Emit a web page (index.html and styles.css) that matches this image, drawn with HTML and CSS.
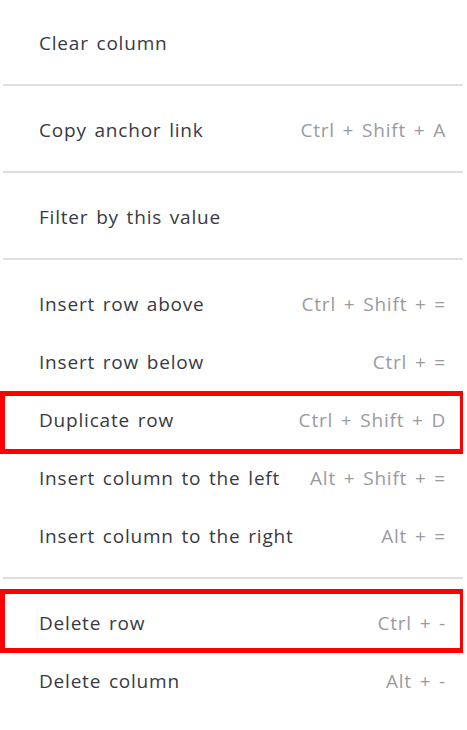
FILE: index.html
```html
<!DOCTYPE html>
<html>
<head>
<meta charset="utf-8">
<link rel="stylesheet" href="styles.css">
</head>
<body>
<div class="menu">
  <div class="item"><span class="label">Clear column</span></div>
  <div class="sep"></div>
  <div class="item"><span class="label">Copy anchor link</span><span class="key">Ctrl + Shift + A</span></div>
  <div class="sep"></div>
  <div class="item"><span class="label">Filter by this value</span></div>
  <div class="sep"></div>
  <div class="item"><span class="label">Insert row above</span><span class="key">Ctrl + Shift + =</span></div>
  <div class="item"><span class="label">Insert row below</span><span class="key">Ctrl + =</span></div>
  <div class="item hl hl-a"><span class="label">Duplicate row</span><span class="key">Ctrl + Shift + D</span></div>
  <div class="item"><span class="label">Insert column to the left</span><span class="key">Alt + Shift + =</span></div>
  <div class="item"><span class="label">Insert column to the right</span><span class="key">Alt + =</span></div>
  <div class="sep"></div>
  <div class="item hl hl-b"><span class="label">Delete row</span><span class="key">Ctrl + -</span></div>
  <div class="item"><span class="label">Delete column</span><span class="key">Alt + -</span></div>
</div>
</body>
</html>
```
FILE: styles.css
```css
html, body {
  margin: 0;
  padding: 0;
  background: #ffffff;
}
.menu {
  width: 467px;
  padding-top: 14px;
  font-family: "Open Sans", "Noto Sans", sans-serif;
  font-size: 19px;
  letter-spacing: 0.8px;
  word-spacing: 2px;
}
.item {
  position: relative;
  height: 58px;
  display: flex;
  align-items: center;
  justify-content: space-between;
  padding: 0 21px 0 39px;
  box-sizing: border-box;
}
.label {
  color: #393943;
}
.key {
  color: #9a9aa1;
}
.sep {
  height: 2px;
  background: #dedede;
  margin: 12px 4px 15px 3px;
}
.hl::after {
  content: "";
  position: absolute;
  left: 0;
  width: 463px;
  box-sizing: border-box;
  border: 5px solid #ff0000;
  border-right-width: 3px;
}
.hl-a::after {
  top: 0;
  bottom: -5px;
}
.hl-b::after {
  top: -5px;
  bottom: -1px;
}
```
